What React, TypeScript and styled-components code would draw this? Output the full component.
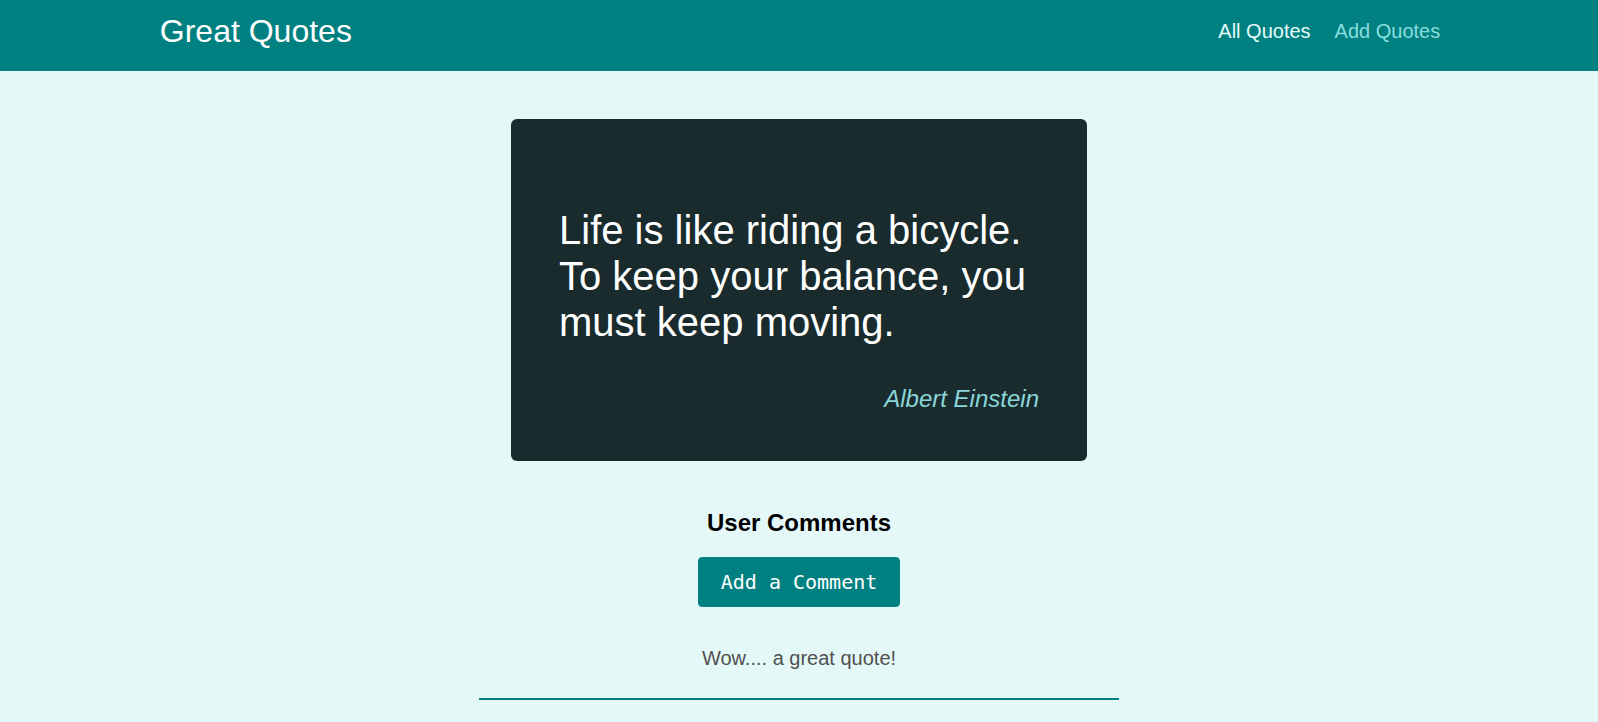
import styled, { createGlobalStyle } from "styled-components";

const GlobalStyle = createGlobalStyle`
  * {
    box-sizing: border-box;
  }

  html {
    font-family: "Liberation Sans", Arial, sans-serif;
    line-height: 1.15;
    scrollbar-width: none;
  }

  html::-webkit-scrollbar {
    display: none;
  }

  body {
    margin: 0;
    background-color: #e5f8f8;
  }
`;

const comments = [{ id: "c1", text: "Wow.... a great quote!" }];

const App = () => {
  return (
    <>
      <GlobalStyle />
      <Header>
        <Logo>Great Quotes</Logo>
        <nav>
          <NavList>
            <NavItem>
              <NavLink href="#" $active>
                All Quotes
              </NavLink>
            </NavItem>
            <NavItem>
              <NavLink href="#">Add Quotes</NavLink>
            </NavItem>
          </NavList>
        </nav>
      </Header>

      <Main>
        {/* Cita destacada */}
        <QuoteCard>
          <QuoteText>
            Life is like riding a bicycle. To keep your balance, you must keep
            moving.
          </QuoteText>
          <QuoteAuthor>Albert Einstein</QuoteAuthor>
        </QuoteCard>

        {/* Comentarios */}
        <Comments>
          <CommentsTitle>User Comments</CommentsTitle>
          <Actions>
            <Button type="button">Add a Comment</Button>
          </Actions>
          <CommentList>
            {comments.map((c) => (
              <CommentItem key={c.id}>
                <CommentText>{c.text}</CommentText>
              </CommentItem>
            ))}
          </CommentList>
        </Comments>
      </Main>
    </>
  );
};

export default App;

const Header = styled.header`
  width: 100%;
  height: 71px;
  display: flex;
  align-items: center;
  justify-content: space-between;
  background-color: #008080;
  padding: 0 calc(10% - 2px) 9px 10%;
`;

const Logo = styled.div`
  font-size: 2rem;
  color: #ffffff;
`;

const NavList = styled.ul`
  list-style: none;
  margin: 0;
  padding: 0;
  display: flex;
  align-items: baseline;
`;

const NavItem = styled.li`
  margin-left: 1.5rem;
  font-size: 1.25rem;
`;

const NavLink = styled.a<{ $active?: boolean }>`
  text-decoration: none;
  color: ${({ $active }) => ($active ? "#e6fcfc" : "#88dfdf")};

  &:hover {
    color: #e6fcfc;
  }
`;

const Main = styled.main`
  margin: 3rem auto;
  width: 90%;
  max-width: 40rem;
`;

const QuoteCard = styled.figure`
  background-color: #192b2d;
  color: #ffffff;
  border-radius: 6px;
  padding: 3rem;
  margin: 3rem auto;
  width: 90%;
  max-width: 40rem;
`;

const QuoteText = styled.p`
  font-size: 2.5rem;
  margin: 2.5rem 0;
`;

const QuoteAuthor = styled.figcaption`
  font-size: 1.5rem;
  font-style: italic;
  text-align: right;
  color: #8ad6da;
`;

const Comments = styled.section`
  text-align: center;
`;

const CommentsTitle = styled.h2`
  font-size: 1.5rem;
  font-weight: bold;
  color: #000000;
  margin: 0 0 21px;
`;

const Actions = styled.div`
  display: flex;
  justify-content: center;
`;

const Button = styled.button`
  font-family: "DejaVu Sans Mono", monospace;
  font-size: 1.25rem;
  line-height: normal;
  cursor: pointer;
  padding: 0.75rem 1.35rem;
  border-radius: 4px;
  background-color: #008080;
  color: #ffffff;
  border: 1px solid #008080;
`;

const CommentList = styled.ul`
  list-style: none;
  margin: 1.5rem 0 0;
  padding: 0;
`;

const CommentItem = styled.li`
  padding: 1rem 0 1.75rem;
  border-bottom: 2px solid #008080;
`;

const CommentText = styled.p`
  margin: 0;
  font-size: 1.25rem;
  color: #505050;
`;
